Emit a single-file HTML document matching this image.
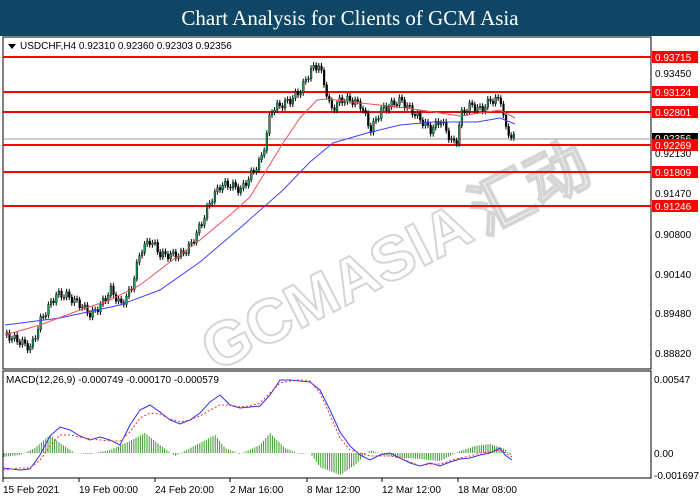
<!DOCTYPE html>
<html><head><meta charset="utf-8"><style>
body{margin:0;width:700px;height:500px;background:#fff;overflow:hidden;font-family:"Liberation Sans",sans-serif}
#t{position:absolute;left:0;top:0;width:700px;height:36px;background:#0f4565;color:#fff;font:21px "Liberation Serif",serif;text-align:center;line-height:36px}
svg{position:absolute;left:0;top:0}
</style></head><body>
<div id="t">Chart Analysis for Clients of GCM Asia</div>
<svg id="s" width="700" height="500" xmlns="http://www.w3.org/2000/svg" font-family="Liberation Sans, sans-serif" font-size="10">
<rect x="3" y="37" width="648" height="332" fill="#fff" stroke="#000"/>
<rect x="3" y="371" width="648" height="107" fill="#fff" stroke="#000"/>
<g id="wm" opacity="0.3" transform="rotate(-27 350 270)">
<text x="330" y="300" text-anchor="middle" font-size="62" font-weight="bold" fill="none" stroke="#777" stroke-width="2">GCMASIA</text>
<text x="485" y="300" font-size="62" font-weight="bold" fill="none" stroke="#777" stroke-width="2">汇动</text>
</g>
<line x1="3" y1="139" x2="651" y2="139" stroke="#999"/>
<g stroke="#f00" stroke-width="2">
<line x1="3" y1="57" x2="651" y2="57"/><line x1="3" y1="92" x2="651" y2="92"/><line x1="3" y1="112" x2="651" y2="112"/><line x1="3" y1="145" x2="651" y2="145"/><line x1="3" y1="172" x2="651" y2="172"/><line x1="3" y1="206" x2="651" y2="206"/>
</g>
<g id="c"></g>
<polyline fill="none" stroke="#4040ff" stroke-width="1" points="5,325 60,318 120,305 160,290 200,262 240,228 283,190 310,162 333,143 367,133 400,125 433,122 477,122 500,118 515,124"/>
<polyline fill="none" stroke="#f05060" stroke-width="1" points="5,335 40,325 80,310 110,300 140,285 170,262 200,240 230,215 250,197 283,143 300,118 317,100 327,99 360,103 390,106 420,110 440,113 460,116 480,113 500,110 515,118"/>
<path d="M8 44 l8 0 l-4 5z" fill="#000"/>
<text x="20" y="49" fill="#000">USDCHF,H4  0.92310 0.92360 0.92303 0.92356</text>
<text x="6" y="383" fill="#000">MACD(12,26,9) -0.000749 -0.000170 -0.000579</text>
<g id="h" stroke="#3a9a2a"></g>
<polyline fill="none" stroke="#3030f0" points="3,468 20,470 30,469 40,455 50,436 60,427 70,430 80,436 90,440 100,437 110,440 120,445 130,425 140,410 150,405 160,412 170,420 180,424 190,420 200,413 210,402 220,395 230,405 240,408 250,407 260,406 270,395 280,380 290,380 300,381 310,382 320,390 330,410 340,432 350,446 360,455 370,460 380,455 390,453 400,458 410,463 420,466 430,463 440,466 450,462 460,459 470,458 480,455 490,453 500,448 505,455 512,460"/>
<polyline fill="none" stroke="#f03030" stroke-dasharray="2,2" points="3,470 20,468 30,468 40,460 50,446 60,435 70,435 80,437 90,439 100,440 110,441 120,441 130,432 140,418 150,413 160,414 170,419 180,422 190,420 200,416 210,410 220,405 230,405 240,407 250,406 260,403 270,393 280,383 290,381 300,380 310,381 320,393 330,415 340,438 350,450 360,453 370,456 380,456 390,456 400,458 410,462 420,466 430,464 440,464 450,461 460,458 470,456 480,453 490,452 500,450 512,457"/>
<g font-size="10" fill="#000">
<text x="655" y="77">0.93450</text><text x="655" y="157">0.92130</text><text x="655" y="197">0.91470</text><text x="655" y="238">0.90800</text><text x="655" y="278">0.90140</text><text x="655" y="317">0.89480</text><text x="655" y="357">0.88820</text>
<text x="654" y="383">0.00547</text><text x="654" y="457">0.00</text><text x="654" y="479">-0.001697</text>
</g>
<rect x="652" y="133" width="46" height="11" fill="#000"/><text x="655" y="142" fill="#fff">0.92356</text>
<g fill="#f00"><rect x="652" y="51" width="46" height="12"/><rect x="652" y="86" width="46" height="12"/><rect x="652" y="106" width="46" height="12"/><rect x="652" y="139" width="46" height="12"/><rect x="652" y="166" width="46" height="12"/><rect x="652" y="200" width="46" height="12"/></g>
<g fill="#fff"><text x="655" y="61">0.93715</text><text x="655" y="96">0.93124</text><text x="655" y="116">0.92801</text><text x="655" y="149">0.92269</text><text x="655" y="176">0.91809</text><text x="655" y="210">0.91246</text></g>
<g fill="#000"><text x="3" y="493">15 Feb 2021</text><text x="79" y="493">19 Feb 00:00</text><text x="155" y="493">24 Feb 20:00</text><text x="230" y="493">2 Mar 16:00</text><text x="307" y="493">8 Mar 12:00</text><text x="382" y="493">12 Mar 12:00</text><text x="458" y="493">18 Mar 08:00</text></g>
<g stroke="#000"><line x1="3" y1="478" x2="3" y2="482"/><line x1="79" y1="478" x2="79" y2="482"/><line x1="155" y1="478" x2="155" y2="482"/><line x1="230" y1="478" x2="230" y2="482"/><line x1="307" y1="478" x2="307" y2="482"/><line x1="382" y1="478" x2="382" y2="482"/><line x1="458" y1="478" x2="458" y2="482"/></g>
</svg>
<script>
var P=[[5,335],[20,342],[30,348],[40,320],[55,295],[65,295],[80,305],[90,315],[100,305],[110,290],[120,305],[130,290],[140,250],[150,240],[160,255],[170,255],[180,255],[190,245],[200,225],[210,200],[220,185],[230,185],[240,190],[250,175],[260,160],[265,140],[270,110],[280,105],[290,100],[300,90],[310,70],[318,65],[325,90],[330,110],[340,100],[350,100],[360,105],[370,130],[380,110],[390,105],[400,100],[410,110],[420,120],[430,130],[440,120],[450,140],[455,145],[460,115],[470,105],[480,110],[490,100],[500,100],[505,130],[515,140]];
function f(x){for(var i=0;i<P.length-1;i++){if(x<=P[i+1][0]){var a=P[i],b=P[i+1];return a[1]+(b[1]-a[1])*(x-a[0])/(b[0]-a[0]);}}return P[P.length-1][1];}
var g=document.getElementById('c'),s='',prev=f(5);
for(var x=6;x<=515;x+=2.6){var y=f(x)+Math.sin(x*1.7)*4;var o=prev,c=y,t=Math.min(o,c),b=Math.max(o,c);var up=c<o;
s+='<line x1="'+(x+0.8)+'" y1="'+(t-3)+'" x2="'+(x+0.8)+'" y2="'+(b+3)+'" stroke="#000"/>';
s+='<rect x="'+x+'" y="'+t+'" width="1.8" height="'+Math.max(b-t,1)+'" fill="'+(up?'#1a9a5a':'#000')+'" stroke="#000" stroke-width="0.4"/>';prev=c;}
g.innerHTML=s;
var M=[[3,4],[20,2],[35,-5],[50,-18],[60,-10],[75,0],[90,1],[110,-3],[130,-12],[145,-20],[160,-8],[175,3],[200,-10],[215,-18],[225,-5],[240,1],[260,-8],[270,-20],[285,-5],[300,1],[310,0],[320,14],[340,22],[355,12],[370,-3],[385,2],[400,5],[420,6],[440,8],[460,-2],[475,-7],[490,-9],[505,-4],[512,4]];
function m(x){for(var i=0;i<M.length-1;i++){if(x<=M[i+1][0]){var a=M[i],b=M[i+1];return a[1]+(b[1]-a[1])*(x-a[0])/(b[0]-a[0]);}}return 0;}
var h='';for(var x=4;x<=514;x+=2.2){var v=m(x);h+='<line x1="'+x+'" y1="453" x2="'+x+'" y2="'+(453+v)+'"/>';}
document.getElementById('h').innerHTML=h;
</script>
</body></html>
